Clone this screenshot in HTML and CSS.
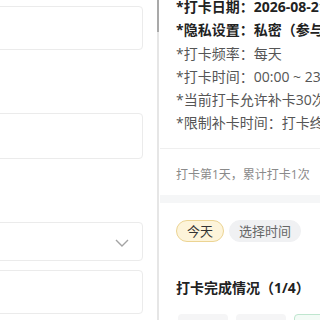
FILE: index.html
```html
<html>
    <head>
        <meta charset="utf-8" />
        <link rel="stylesheet" href="styles.css" />
        <title>打卡详情</title>
    </head>

    <body>
        <div class="page">
            <div class="form-panel">
                <div class="field field-a"></div>
                <div class="field field-b"></div>
                <div class="field field-select">
                    <svg class="chevron" width="14" height="8" viewBox="0 0 14 8">
                        <path d="M1 1 L7 7 L13 1" fill="none" stroke="#a3a3a3" stroke-width="1.4" />
                    </svg>
                </div>
                <div class="field field-d"></div>
            </div>

            <div class="scroll-track">
                <div class="scroll-thumb"></div>
            </div>

            <div class="detail-panel">
                <div class="info-card">
                    <div class="info-line strong">*打卡日期：2026-08-21 ~ 2026-09-20</div>
                    <div class="info-line strong">*隐私设置：私密（参与人可见）</div>
                    <div class="info-line">*打卡频率：每天</div>
                    <div class="info-line">*打卡时间：00:00 ~ 23:59</div>
                    <div class="info-line">*当前打卡允许补卡30次</div>
                    <div class="info-line">*限制补卡时间：打卡终止前可补卡</div>
                </div>

                <div class="stats">打卡第1天，累计打卡1次</div>

                <div class="section-gap"></div>

                <div class="date-tabs">
                    <span class="tab tab-active">今天</span>
                    <span class="tab">选择时间</span>
                </div>

                <div class="section-title">打卡完成情况（1/4）</div>

                <div class="member-grid">
                    <div class="member"></div>
                    <div class="member"></div>
                    <div class="member member-done"></div>
                </div>
            </div>
        </div>
    </body>
</html>
```

FILE: styles.css
```css
body {
    margin: 0px;
    font-family: "Open Sans", "Noto Sans CJK SC", sans-serif;
    background: #ffffff;
}

.page {
    display: flex;
    width: 320px;
    height: 320px;
    overflow: hidden;
}

/* left form column, scrolled so the fields are cut on the left */
.form-panel {
    width: 143px;
    padding-right: 14px;
    flex-shrink: 0;
    display: flex;
    flex-direction: column;
    align-items: flex-end;
    overflow: hidden;
}

.field {
    flex-shrink: 0;
    width: 300px;
    box-sizing: border-box;
    border: 1px solid #ebebeb;
    border-radius: 4px;
    background: #ffffff;
}

.field-a {
    margin-top: 6px;
    height: 44px;
}

.field-b {
    margin-top: 63px;
    height: 46px;
}

.field-select {
    margin-top: 63px;
    height: 39px;
    display: flex;
    align-items: center;
    justify-content: flex-end;
    padding-right: 13px;
}

.chevron {
    display: block;
    margin-top: 2px;
}

.field-d {
    margin-top: 9px;
    height: 44px;
}

.scroll-track {
    width: 2px;
    flex-shrink: 0;
    background: #e6e6e6;
}

.scroll-thumb {
    height: 32px;
    background: #a9a9a9;
}

/* right detail column */
.detail-panel {
    flex: 1;
    min-width: 0;
    overflow: hidden;
    padding-left: 16px;
    margin-left: 1px;
}

.info-card {
    margin-top: -5px;
    padding-bottom: 13px;
    margin-left: -17px;
    padding-left: 17px;
    border-bottom: 1px solid #efefef;
}

.info-line {
    font-size: 14px;
    line-height: 23.3px;
    color: #555555;
    white-space: nowrap;
}

.info-line.strong {
    font-weight: bold;
    color: #222222;
}

.stats {
    padding: 17px 0 11px;
    font-size: 12px;
    line-height: 18px;
    color: #8a8a8a;
    white-space: nowrap;
}

.section-gap {
    height: 8px;
    margin-left: -17px;
    background: #f5f6f7;
}

.date-tabs {
    display: flex;
    gap: 5px;
    padding-top: 17px;
}

.tab {
    height: 22px;
    box-sizing: border-box;
    padding: 0 9px;
    border-radius: 11px;
    border: 1px solid #f0f1f3;
    background: #f0f1f3;
    font-size: 13px;
    line-height: 20px;
    color: #666666;
    white-space: nowrap;
}

.tab-active {
    padding: 0 10px;
    background: #fdf4da;
    border-color: #ecd493;
    color: #333333;
}

.section-title {
    margin-top: 36px;
    font-size: 14px;
    font-weight: bold;
    line-height: 20px;
    color: #222222;
    white-space: nowrap;
}

.member-grid {
    display: flex;
    gap: 8px;
    margin-top: 16px;
    padding-left: 2px;
}

.member {
    width: 50px;
    height: 60px;
    flex-shrink: 0;
    border-radius: 4px;
    background: #f5f5f6;
    box-sizing: border-box;
}

.member-done {
    background: #f3fbf6;
    border: 1px solid #bfe6cf;
}
```
